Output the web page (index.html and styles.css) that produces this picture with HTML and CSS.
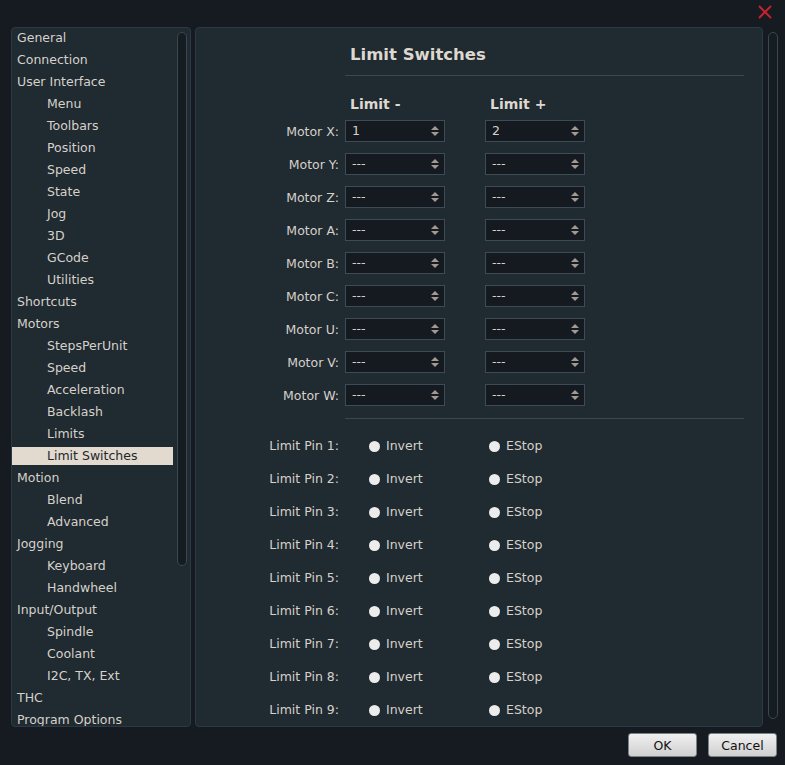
FILE: index.html
```html
<!DOCTYPE html>
<html lang="en">
<head>
    <meta charset="UTF-8">
    <meta name="viewport" content="width=device-width, initial-scale=1.0">
    <title>Settings</title>
    <link rel="stylesheet" href="styles.css">
</head>
<body>
    <div class="window">
        <div class="titlebar">
            <svg class="close" width="14" height="14" viewBox="0 0 14 14">
                <path d="M1 1 L13 13 M13 1 L1 13" stroke="#c4212e" stroke-width="2" fill="none"/>
            </svg>
        </div>
        <div class="main">
            <div class="nav-panel">
                <ul class="nav">
                    <li>General</li>
                    <li>Connection</li>
                    <li>User Interface</li>
                    <li class="sub">Menu</li>
                    <li class="sub">Toolbars</li>
                    <li class="sub">Position</li>
                    <li class="sub">Speed</li>
                    <li class="sub">State</li>
                    <li class="sub">Jog</li>
                    <li class="sub">3D</li>
                    <li class="sub">GCode</li>
                    <li class="sub">Utilities</li>
                    <li>Shortcuts</li>
                    <li>Motors</li>
                    <li class="sub">StepsPerUnit</li>
                    <li class="sub">Speed</li>
                    <li class="sub">Acceleration</li>
                    <li class="sub">Backlash</li>
                    <li class="sub">Limits</li>
                    <li class="sub selected">Limit Switches</li>
                    <li>Motion</li>
                    <li class="sub">Blend</li>
                    <li class="sub">Advanced</li>
                    <li>Jogging</li>
                    <li class="sub">Keyboard</li>
                    <li class="sub">Handwheel</li>
                    <li>Input/Output</li>
                    <li class="sub">Spindle</li>
                    <li class="sub">Coolant</li>
                    <li class="sub">I2C, TX, Ext</li>
                    <li>THC</li>
                    <li>Program Options</li>
                </ul>
                <div class="scroll nav-scroll"></div>
            </div>

            <div class="page">
                <h2 class="page-title">Limit Switches</h2>
                <div class="line"></div>

                <div class="grid heads">
                    <span></span>
                    <span class="col-head">Limit -</span>
                    <span class="col-head">Limit +</span>
                </div>

                <div class="grid motors">
                    <label>Motor X:</label><div class="select">1</div><div class="select">2</div>
                    <label>Motor Y:</label><div class="select">---</div><div class="select">---</div>
                    <label>Motor Z:</label><div class="select">---</div><div class="select">---</div>
                    <label>Motor A:</label><div class="select">---</div><div class="select">---</div>
                    <label>Motor B:</label><div class="select">---</div><div class="select">---</div>
                    <label>Motor C:</label><div class="select">---</div><div class="select">---</div>
                    <label>Motor U:</label><div class="select">---</div><div class="select">---</div>
                    <label>Motor V:</label><div class="select">---</div><div class="select">---</div>
                    <label>Motor W:</label><div class="select">---</div><div class="select">---</div>
                </div>

                <div class="line line-2"></div>

                <div class="grid pins">
                    <label>Limit Pin 1:</label><span class="radio invert"><i></i>Invert</span><span class="radio estop"><i></i>EStop</span>
                    <label>Limit Pin 2:</label><span class="radio invert"><i></i>Invert</span><span class="radio estop"><i></i>EStop</span>
                    <label>Limit Pin 3:</label><span class="radio invert"><i></i>Invert</span><span class="radio estop"><i></i>EStop</span>
                    <label>Limit Pin 4:</label><span class="radio invert"><i></i>Invert</span><span class="radio estop"><i></i>EStop</span>
                    <label>Limit Pin 5:</label><span class="radio invert"><i></i>Invert</span><span class="radio estop"><i></i>EStop</span>
                    <label>Limit Pin 6:</label><span class="radio invert"><i></i>Invert</span><span class="radio estop"><i></i>EStop</span>
                    <label>Limit Pin 7:</label><span class="radio invert"><i></i>Invert</span><span class="radio estop"><i></i>EStop</span>
                    <label>Limit Pin 8:</label><span class="radio invert"><i></i>Invert</span><span class="radio estop"><i></i>EStop</span>
                    <label>Limit Pin 9:</label><span class="radio invert"><i></i>Invert</span><span class="radio estop"><i></i>EStop</span>
                </div>
            </div>

            <div class="scroll page-scroll"></div>
        </div>
        <div class="footer">
            <button class="btn">OK</button>
            <button class="btn">Cancel</button>
        </div>
    </div>
</body>
</html>
```

FILE: styles.css
```css
html, body {
    margin: 0;
    padding: 0;
    background: #151b21;
}

.window {
    width: 785px;
    height: 765px;
    box-sizing: border-box;
    font-family: "DejaVu Sans", Verdana, sans-serif;
    font-size: 12.5px;
    color: #d6d1ca;
    display: flex;
    flex-direction: column;
}

.titlebar {
    height: 27px;
    display: flex;
    justify-content: flex-end;
    align-items: flex-start;
}

.close {
    margin-top: 5px;
    margin-right: 13px;
}

.main {
    display: flex;
    height: 700px;
}

.nav-panel {
    margin-left: 11px;
    width: 180px;
    box-sizing: border-box;
    border: 1px solid #2c3942;
    border-radius: 4px;
    background: #202a31;
    display: flex;
    overflow: hidden;
}

.nav {
    list-style: none;
    margin: 0;
    padding: 1px 0 0;
    width: 161px;
}

.nav li {
    line-height: 18px;
    height: 18px;
    margin-bottom: 4px;
    padding-left: 5px;
    white-space: nowrap;
}

.nav li.sub {
    padding-left: 35px;
}

.nav li.selected {
    background: #e2d9cf;
    color: #22272b;
}

.scroll {
    width: 10px;
    box-sizing: border-box;
    border: 1px solid #3a4853;
    border-radius: 5px;
    background: #151c22;
}

.nav-scroll {
    margin-left: 4px;
    margin-top: 4px;
    height: 534px;
}

.page {
    margin-left: 4px;
    width: 568px;
    box-sizing: border-box;
    border: 1px solid #2c3942;
    border-radius: 4px;
    background: #202a31;
    padding-top: 17px;
}

.page-title {
    margin: 0 0 0 154px;
    font-size: 16.5px;
    line-height: 20px;
    font-weight: bold;
    color: #ddd8d0;
}

.line {
    margin: 10px 0 0 149px;
    width: 399px;
    height: 1px;
    background: #3a4853;
}

.line-2 {
    margin-top: 12px;
}

.grid {
    display: grid;
    grid-template-columns: 143px 134px 100px;
    column-gap: 6px;
}

.heads {
    margin-top: 19px;
    height: 18px;
}

.col-head {
    font-size: 14px;
    font-weight: bold;
    line-height: 18px;
    padding-left: 5px;
    color: #ddd8d0;
}

.motors {
    margin-top: 7px;
    row-gap: 11px;
}

.grid label {
    text-align: right;
    align-self: center;
    white-space: nowrap;
}

.select {
    position: relative;
    width: 100px;
    height: 22px;
    box-sizing: border-box;
    border: 1px solid #3d4b56;
    background: #141a20;
    line-height: 20px;
    padding-left: 6px;
    color: #d6d1ca;
}

.select::before,
.select::after {
    content: "";
    position: absolute;
    right: 5px;
    border-left: 4px solid transparent;
    border-right: 4px solid transparent;
}

.select::before {
    top: 5px;
    border-bottom: 4px solid #a19a92;
}

.select::after {
    top: 11px;
    border-top: 4px solid #a19a92;
}

.pins {
    margin-top: 18px;
    row-gap: 15px;
}

.pins > * {
    line-height: 18px;
}

.radio {
    display: flex;
    align-items: center;
    white-space: nowrap;
}

.radio i {
    width: 11px;
    height: 11px;
    border-radius: 50%;
    background: #ececec;
    margin-right: 6px;
}

.radio.invert {
    padding-left: 24px;
}

.radio.estop {
    padding-left: 4px;
}

.page-scroll {
    margin-left: 5px;
    margin-top: 5px;
    height: 687px;
}

.footer {
    display: flex;
    justify-content: flex-end;
    gap: 11px;
    padding-top: 6px;
    padding-right: 8px;
}

.btn {
    width: 69px;
    height: 24px;
    border: 1px solid #7c8186;
    border-radius: 3px;
    background: linear-gradient(180deg, #f0f0f0, #cfcfcf);
    font-family: "DejaVu Sans", Verdana, sans-serif;
    font-size: 12.5px;
    color: #111;
    padding: 0;
}
```
